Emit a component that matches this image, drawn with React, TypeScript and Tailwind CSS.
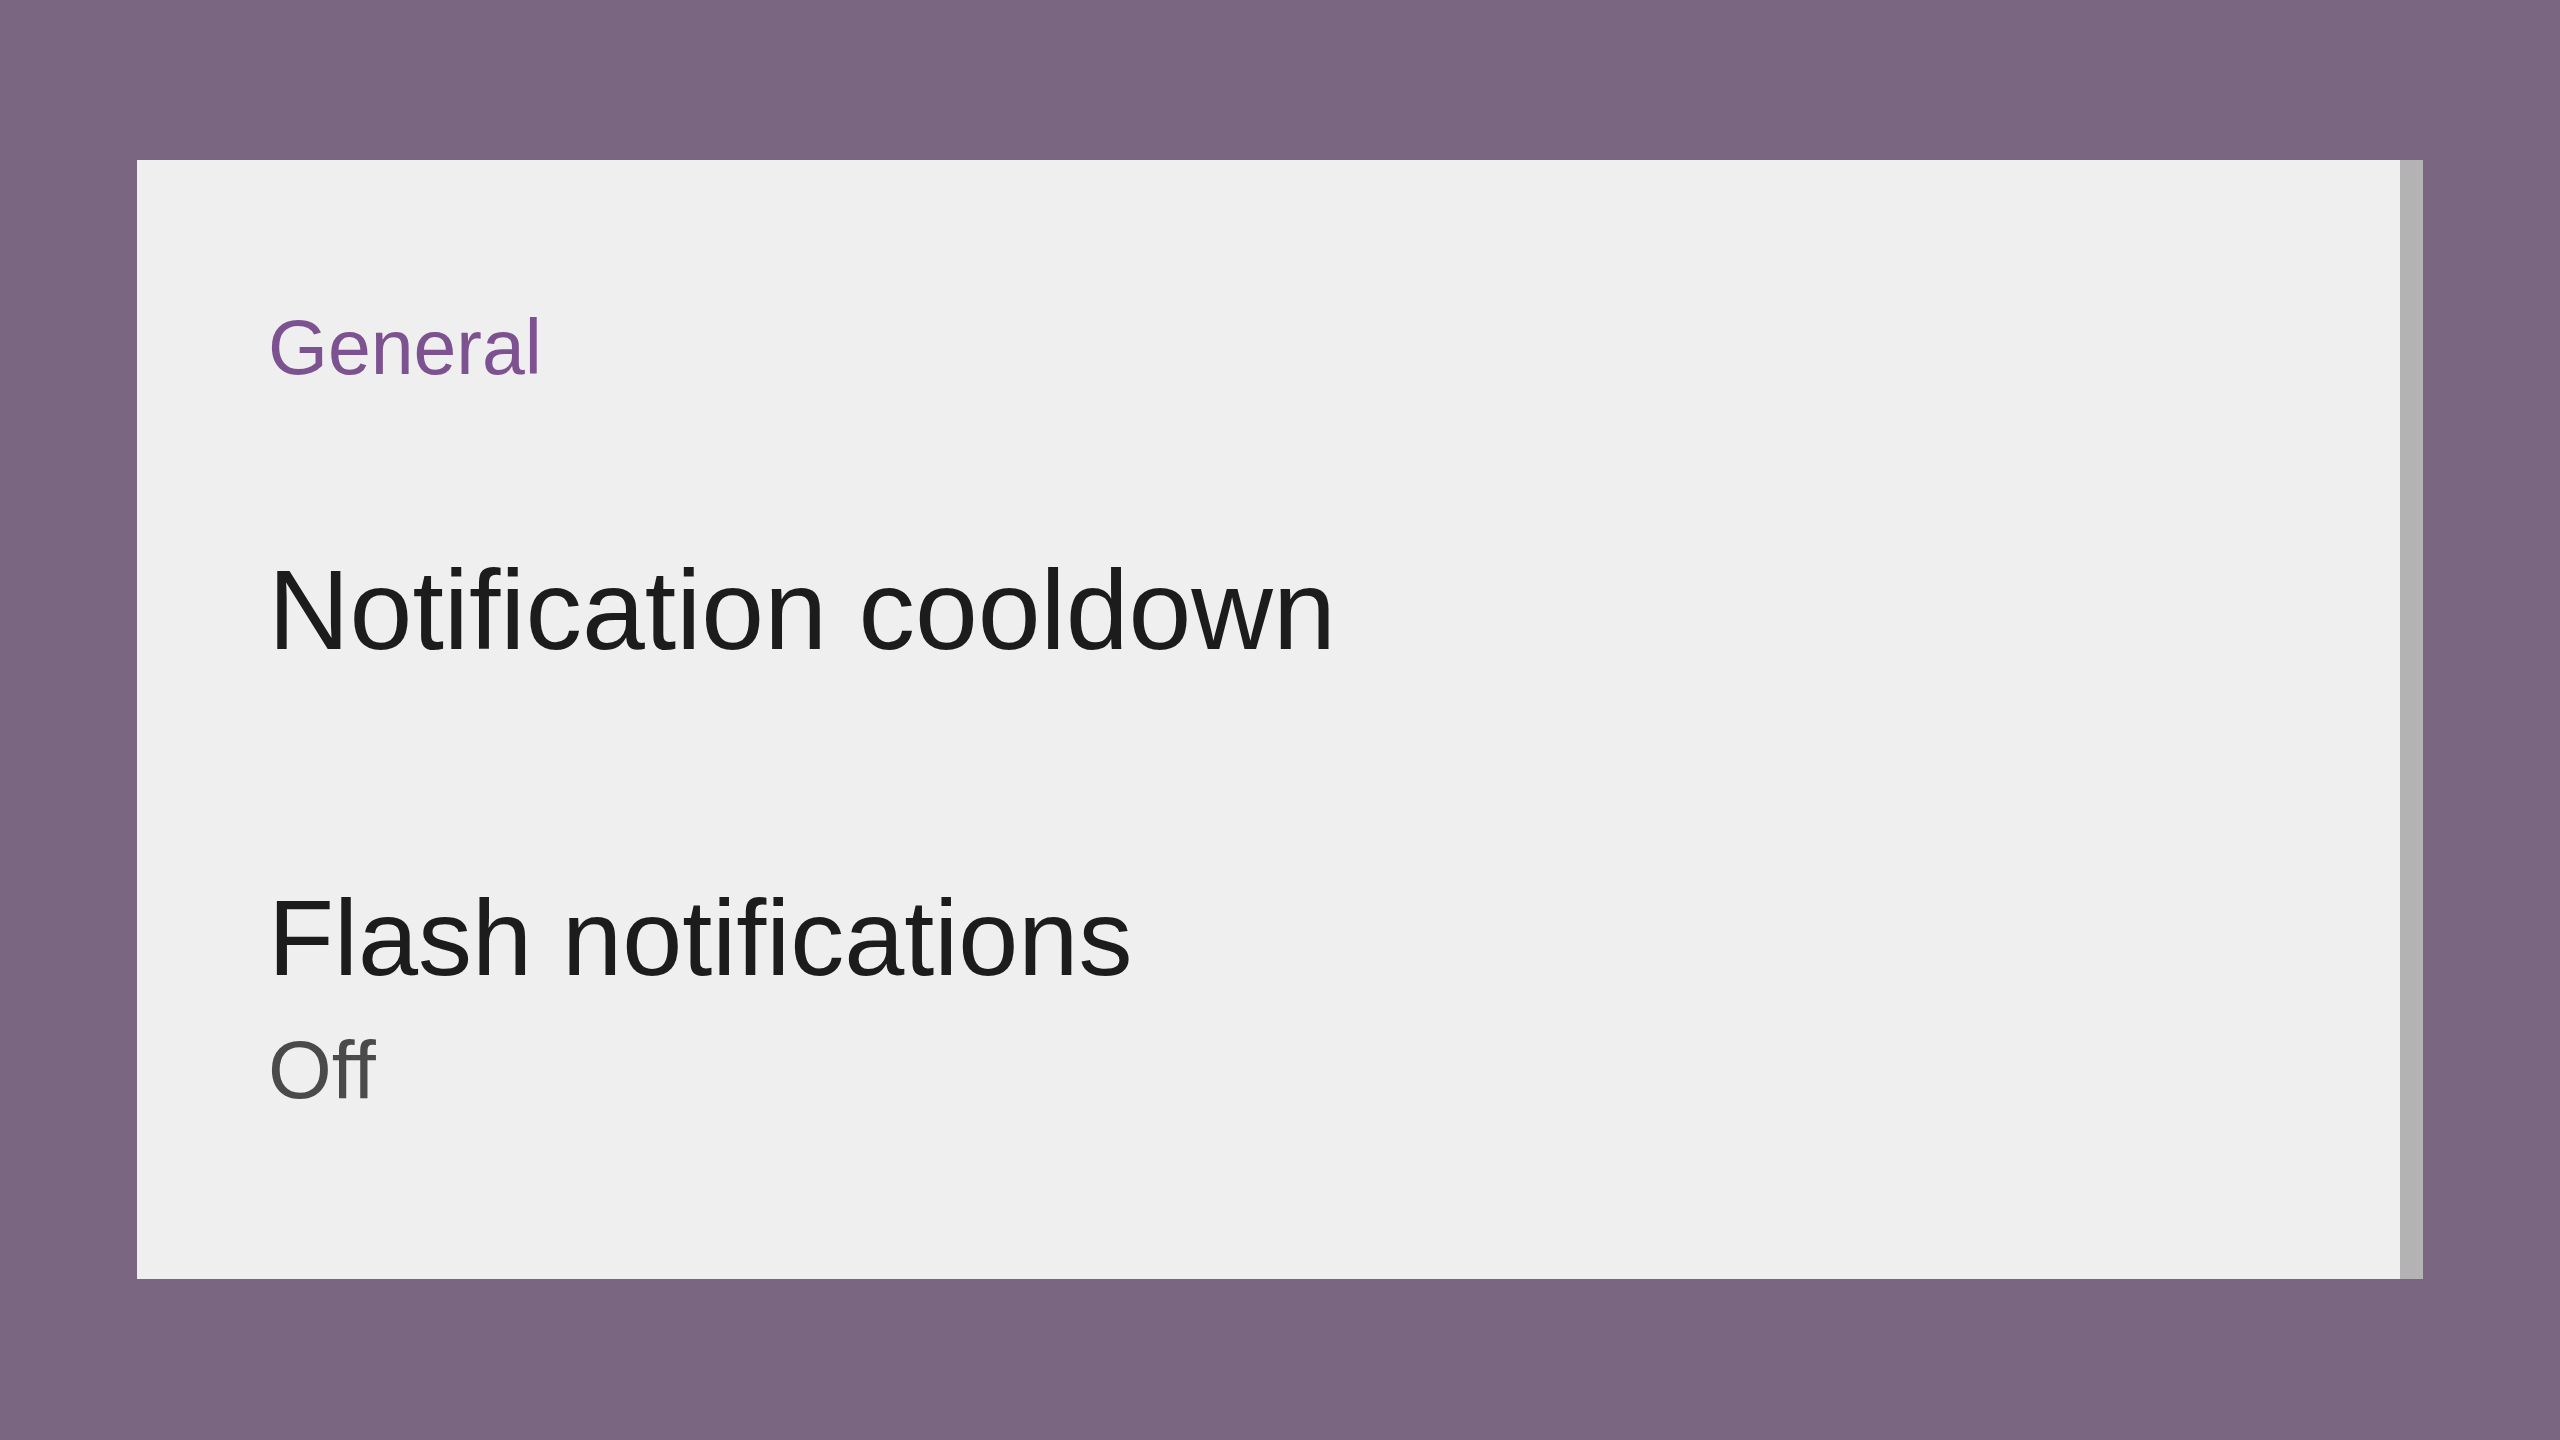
export default function App() {
  return (
    <div
      className="w-full h-screen bg-[#7a6680] pt-[160px] pl-[137px]"
      style={{ fontFamily: '"Liberation Sans", Arial, sans-serif' }}
    >
      {/* settings sheet with its scroll track on the right */}
      <div className="flex w-[2286px] h-[1119px] bg-[#efefef]">
        <div className="flex-1 pl-[131px] pt-[149px]">
          <h2 className="text-[77px] leading-none text-[#7d5290]">General</h2>

          <div className="mt-[168px] text-[113px] leading-none text-[#1c1c1c]">
            Notification cooldown
          </div>

          <div className="mt-[217px]">
            <div className="text-[108px] leading-none text-[#1c1c1c]">Flash notifications</div>
            <div className="mt-[37px] text-[82px] leading-none text-[#4a4a4a]">Off</div>
          </div>
        </div>
        <div className="w-[23px] h-full bg-[#b3b3b3]" />
      </div>
    </div>
  );
}
